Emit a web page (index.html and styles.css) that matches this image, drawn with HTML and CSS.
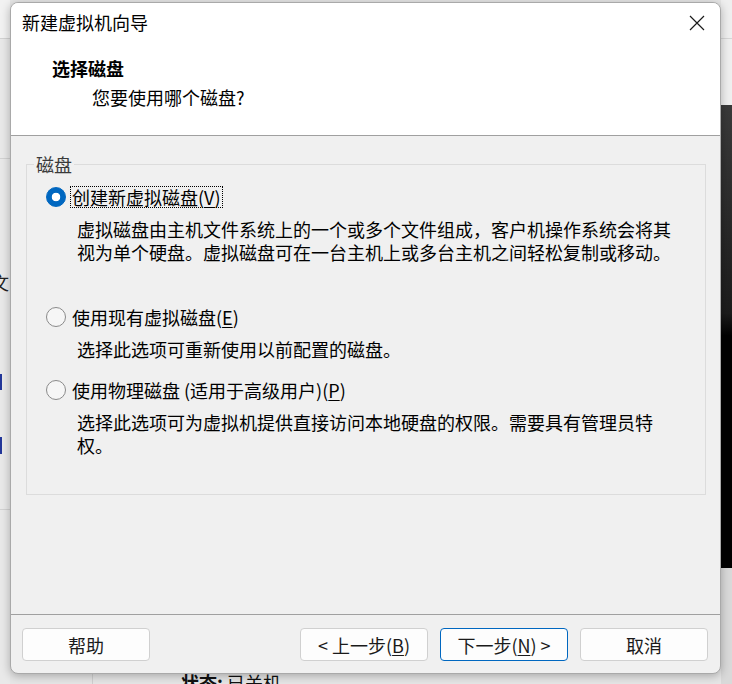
FILE: index.html
```html
<!DOCTYPE html>
<html lang="zh-CN">
<head>
<meta charset="utf-8">
<title>新建虚拟机向导</title>
<link rel="stylesheet" href="styles.css">
</head>
<body>
<div class="desktop">
  <div class="bg-left">
    <div class="bg-hline bg-hline-a"></div>
    <div class="bg-hline bg-hline-b"></div>
    <span class="bg-glyph">文</span>
    <div class="bg-mark bg-mark-a"></div>
    <div class="bg-mark bg-mark-b"></div>
    <div class="bg-hline bg-hline-c"></div>
  </div>
  <div class="bg-right">
    <div class="bg-right-top"></div>
    <div class="bg-right-dark"></div>
    <div class="bg-right-bottom"></div>
  </div>
  <div class="bg-vline"></div>
  <div class="bg-status"><b>状态:</b> 已关机</div>

  <div class="dialog">
    <div class="head">
      <div class="titlebar">
        <span class="title">新建虚拟机向导</span>
        <svg class="close" width="16" height="16" viewBox="0 0 16 16"><path d="M1 1L15 15M15 1L1 15" stroke="#1b1b1b" stroke-width="1.2" fill="none"/></svg>
      </div>
      <div class="heading">选择磁盘</div>
      <div class="subheading">您要使用哪个磁盘?</div>
    </div>
    <div class="body">
      <div class="group">
        <span class="legend">磁盘</span>
        <div class="option">
          <div class="radio-row"><span class="radio checked"></span><span class="label focus">创建新虚拟磁盘(<u>V</u>)</span></div>
          <p class="desc tall">虚拟磁盘由主机文件系统上的一个或多个文件组成，客户机操作系统会将其视为单个硬盘。虚拟磁盘可在一台主机上或多台主机之间轻松复制或移动。</p>
        </div>
        <div class="option">
          <div class="radio-row"><span class="radio"></span><span class="label">使用现有虚拟磁盘(<u>E</u>)</span></div>
          <p class="desc">选择此选项可重新使用以前配置的磁盘。</p>
        </div>
        <div class="option">
          <div class="radio-row"><span class="radio"></span><span class="label">使用物理磁盘 (适用于高级用户)(<u>P</u>)</span></div>
          <p class="desc">选择此选项可为虚拟机提供直接访问本地硬盘的权限。需要具有管理员特权。</p>
        </div>
      </div>
    </div>
    <div class="footer">
      <button class="btn">帮助</button>
      <span class="spacer"></span>
      <button class="btn">&lt; 上一步(<u>B</u>)</button>
      <button class="btn primary">下一步(<u>N</u>) &gt;</button>
      <button class="btn">取消</button>
    </div>
  </div>
</div>
</body>
</html>
```

FILE: styles.css
```css
* { box-sizing: border-box; }
html, body { margin: 0; padding: 0; }
body {
  width: 732px;
  height: 684px;
  overflow: hidden;
  font-family: "Noto Sans CJK SC", "Liberation Sans", sans-serif;
  color: #000;
}
.desktop {
  position: relative;
  width: 732px;
  height: 684px;
  background: #e6e6e6;
  overflow: hidden;
}

/* background window pieces */
.bg-left {
  position: absolute;
  left: 0; top: 0;
  width: 10px; height: 684px;
  background: linear-gradient(to bottom, #f2f2f2 0 38px, #e9e9e9 38px);
}
.bg-hline { position: absolute; left: 0; width: 10px; height: 1px; background: #d2d2d2; }
.bg-hline-a { top: 38px; }
.bg-hline-b { top: 158px; }
.bg-hline-c { top: 509px; }
.bg-glyph { position: absolute; left: -9px; top: 271px; font-size: 18px; line-height: 22px; color: #222; }
.bg-mark { position: absolute; left: 0; width: 2px; background: #23379a; }
.bg-mark-a { top: 374px; height: 16px; }
.bg-mark-b { top: 437px; height: 17px; }

.bg-right {
  position: absolute;
  left: 721px; top: 0;
  width: 11px; height: 684px;
  display: flex; flex-direction: column;
}
.bg-right-top { height: 105px; background: #efefef; border-top: 38px solid #efefef; box-shadow: inset 0 1px 0 #d6d6d6; }
.bg-right-dark { height: 463px; background: linear-gradient(to bottom, #3a3a3a, #1c1c1c 45%, #000 50%, #000); }
.bg-right-bottom { flex: 1; background: #d9d9d9; }

.bg-vline { position: absolute; left: 92px; top: 660px; width: 1px; height: 24px; background: #d0d0d0; }
.bg-status { position: absolute; left: 181px; top: 671px; font-size: 18px; line-height: 22px; color: #111; }

/* dialog */
.dialog {
  position: absolute;
  left: 10px; top: 2px;
  width: 711px; height: 672px;
  border: 1px solid #a9a9a9;
  border-radius: 8px;
  background: #f0f0f0;
  overflow: hidden;
  display: flex;
  flex-direction: column;
  box-shadow: 0 2px 10px rgba(0, 0, 0, 0.28);
  z-index: 1;
}
.head {
  flex: none;
  height: 133px;
  background: #fff;
  border-bottom: 1px solid #a0a0a0;
}
.titlebar {
  display: flex;
  align-items: center;
  justify-content: space-between;
  height: 38px;
  padding: 0 15px 0 11px;
}
.title { font-size: 18px; line-height: 24px; }
.close { display: block; margin-top: 2px; }
.heading { font-size: 18px; font-weight: bold; line-height: 24px; margin: 15px 0 0 41px; }
.subheading { font-size: 18px; line-height: 24px; margin: 5px 0 0 81px; }

.body {
  flex: 1;
  padding: 28px 14px 0 15px;
}
.group {
  position: relative;
  height: 331px;
  border: 1px solid #dcdcdc;
  padding: 21px 0 0 19px;
  display: flex;
  flex-direction: column;
  gap: 18px;
}
.legend {
  position: absolute;
  left: 7px; top: -11px;
  padding: 0 2px;
  background: #f0f0f0;
  font-size: 18px;
  line-height: 20px;
  color: #3a3a3a;
}
.radio-row { display: flex; align-items: center; height: 22px; }
.radio {
  flex: none;
  width: 20px; height: 20px;
  border-radius: 50%;
  border: 1px solid #8a8a8a;
  background: #f6f6f6;
}
.radio.checked {
  border-color: #0067c0;
  background: radial-gradient(circle, #fff 0 4px, #0067c0 4.6px);
}
.label {
  margin-left: 5px;
  padding: 0 1px;
  font-size: 18px;
  line-height: 20px;
  white-space: nowrap;
}
.label u, .btn u { text-underline-offset: 2px; }
.label.focus { outline: 1px dotted #000; }
.desc {
  margin: 10px 0 0 31px;
  width: 604px;
  font-size: 18px;
  line-height: 23px;
}
.desc.tall { min-height: 70px; }

.footer {
  flex: none;
  height: 59px;
  border-top: 1px solid #a0a0a0;
  display: flex;
  align-items: flex-start;
  gap: 12px;
  padding: 13px 12px 0 11px;
}
.spacer { flex: 1; }
.btn {
  width: 128px;
  height: 33px;
  padding: 0;
  border: 1px solid #d0d0d0;
  border-radius: 4px;
  background: #fdfdfd;
  font-family: "Noto Sans CJK SC", "Liberation Sans", sans-serif;
  font-size: 18px;
  line-height: 24px;
  color: #1a1a1a;
}
.btn.primary { border-color: #0067c0; }
```
